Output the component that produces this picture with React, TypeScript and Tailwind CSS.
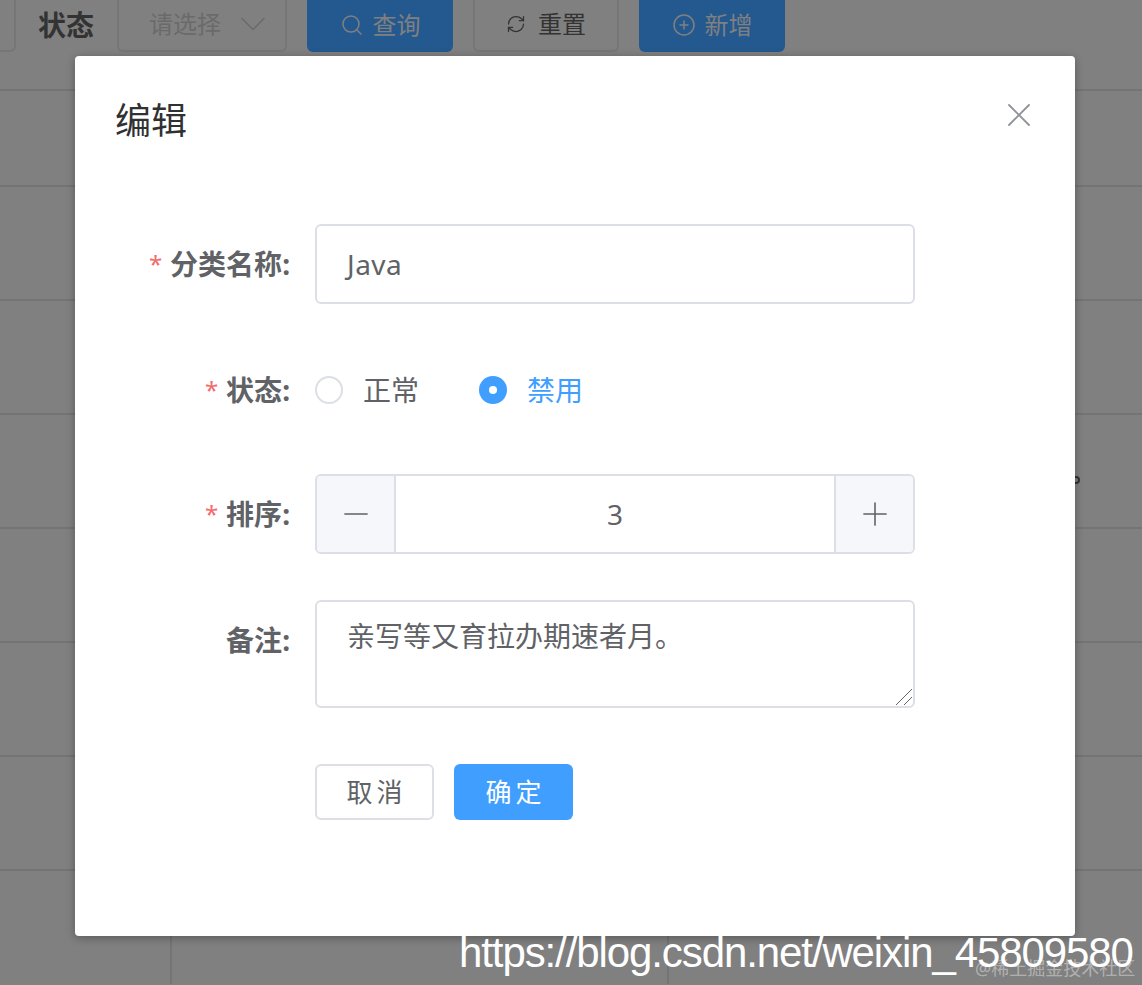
import { Search, RefreshCw, CirclePlus, ChevronDown, X, Minus, Plus } from 'lucide-react';

const font = 'font-["Noto_Sans","Noto_Sans_CJK_SC",sans-serif]';

// table rows behind the overlay
const rowHeights = ['h-[39px]', 'h-[96px]', 'h-[114px]', 'h-[114px]', 'h-[114px]', 'h-[114px]', 'h-[114px]', 'h-[114px]'];

function Backdrop() {
  return (
    <div className="h-[985px] overflow-hidden bg-[#808080]">
      {/* Toolbar */}
      <div className="flex h-[52px] items-end text-[#5e5e5e]">
        <div className="h-[52px] w-[16px] rounded-br-md border-r-2 border-b-2 border-[#767676]" />
        <span className="mb-[11px] ml-[22px] text-[28px] leading-[32px] font-bold text-[#333333]">状态</span>
        <div className="ml-[23px] flex h-[52px] w-[170px] items-center justify-between rounded-b-md border-2 border-t-0 border-[#767676] pb-[3px] pr-[10px] pl-[30px]">
          <span className="text-[24px] text-[#6a6a6a]">请选择</span>
          <ChevronDown className="h-[44px] w-[44px] text-[#6a6a6a]" strokeWidth={0.8} />
        </div>
        <div className="ml-[20px] flex h-[52px] w-[146px] items-center justify-center gap-[9px] rounded-b-md bg-[#24598f] pb-[3px] text-[#808080]">
          <Search className="h-[24px] w-[24px]" strokeWidth={1.5} />
          <span className="text-[24px]">查询</span>
        </div>
        <div className="ml-[20px] flex h-[52px] w-[146px] items-center justify-center gap-[12px] rounded-b-md border-2 border-t-0 border-[#767676] pb-[3px] text-[#333333]">
          <RefreshCw className="h-[20px] w-[20px]" strokeWidth={1.5} />
          <span className="text-[24px]">重置</span>
        </div>
        <div className="ml-[20px] flex h-[52px] w-[146px] items-center justify-center gap-[9px] rounded-b-md bg-[#24598f] pb-[3px] text-[#808080]">
          <CirclePlus className="h-[24px] w-[24px]" strokeWidth={1.5} />
          <span className="text-[24px]">新增</span>
        </div>
      </div>

      {/* Table */}
      {rowHeights.map((h, i) => (
        <div key={i} className={`${h} border-b-2 border-[#747474]`} />
      ))}
      <div className="flex h-[113px]">
        <div className="h-full w-[172px] border-r-2 border-[#747474]" />
        <div className="h-full w-[497px] border-r-2 border-[#747474]" />
      </div>
    </div>
  );
}

function Label({ text, required }: { text: string; required?: boolean }) {
  return (
    <label className="flex w-[175px] shrink-0 items-center justify-end text-[28px] leading-[30px] font-bold text-[#606266]">
      {required && <span className="mr-[8px] text-[24px] font-normal text-[#f56c6c]">*</span>}
      {text}:
    </label>
  );
}

export default function App() {
  return (
    <div className={`relative h-[985px] w-[1142px] overflow-hidden ${font}`}>
      <Backdrop />

      {/* Bits of the page that stick out from behind the dialog */}
      <span className="absolute top-[476px] left-[1072px] h-[8px] w-[8px] rounded-full border-2 border-[#333333]" />
      <span className="absolute top-[906px] left-[835px] text-[26px] leading-[30px] font-bold whitespace-nowrap text-[#222222]">
        精选分类 3
      </span>

      {/* Dialog */}
      <div className="absolute top-[56px] left-[75px] h-[880px] w-[1000px] rounded-[4px] bg-white px-[40px] shadow-[0_2px_10px_rgba(0,0,0,0.3)]">
        <div className="flex h-[168px] items-start justify-between pt-[38px]">
          <span className="text-[36px] leading-[54px] text-[#303133]">编辑</span>
          <X className="mt-[1px] mr-[-4px] h-[40px] w-[40px] text-[#909399]" strokeWidth={1.1} />
        </div>

        {/* Form */}
        <div className="flex h-[80px] items-center gap-[25px]">
          <Label text="分类名称" required />
          <div className="flex h-[80px] w-[600px] items-center rounded-[6px] border-2 border-[#dcdfe6] pl-[30px] text-[28px] tracking-[0.5px] text-[#606266]">
            Java
          </div>
        </div>

        <div className="mt-[46px] flex h-[80px] items-center gap-[25px]">
          <Label text="状态" required />
          <div className="flex items-center">
            <span className="h-[28px] w-[28px] rounded-full border-2 border-[#dcdfe6] bg-white" />
            <span className="ml-[20px] text-[28px] text-[#606266]">正常</span>
            <span className="ml-[60px] flex h-[28px] w-[28px] items-center justify-center rounded-full bg-[#409eff]">
              <span className="h-[8px] w-[8px] rounded-full bg-white" />
            </span>
            <span className="ml-[20px] text-[28px] text-[#409eff]">禁用</span>
          </div>
        </div>

        <div className="mt-[44px] flex h-[80px] items-center gap-[25px]">
          <Label text="排序" required />
          <div className="flex h-[80px] w-[600px] items-stretch overflow-hidden rounded-[6px] border-2 border-[#dcdfe6] text-[#606266]">
            <div className="flex w-[79px] items-center justify-center border-r-2 border-[#dcdfe6] bg-[#f5f7fa]">
              <Minus className="h-[38px] w-[38px]" strokeWidth={1} />
            </div>
            <div className="flex flex-1 items-center justify-center text-[28px]">3</div>
            <div className="flex w-[79px] items-center justify-center border-l-2 border-[#dcdfe6] bg-[#f5f7fa]">
              <Plus className="h-[38px] w-[38px]" strokeWidth={1} />
            </div>
          </div>
        </div>

        <div className="mt-[46px] flex h-[108px] items-start gap-[25px]">
          <div className="flex h-[80px] items-center">
            <Label text="备注" />
          </div>
          <div className="relative h-[108px] w-[600px] rounded-[6px] border-2 border-[#dcdfe6] pt-[13px] pl-[30px] text-[28px] leading-[42px] text-[#606266]">
            亲写等又育拉办期速者月。
            <svg className="absolute right-0 bottom-0" width="18" height="18" viewBox="0 0 18 18" stroke="#666" strokeWidth="1" fill="none">
              <path d="M1 17 17 1M9 17l8-8" />
            </svg>
          </div>
        </div>

        <div className="mt-[56px] ml-[200px] flex gap-[20px]">
          <button className="h-[56px] w-[119px] rounded-[6px] border-2 border-[#dcdfe6] bg-white pl-[4px] text-[26px] tracking-[4px] text-[#606266]">取消</button>
          <button className="h-[56px] w-[119px] rounded-[6px] bg-[#409eff] pl-[4px] text-[26px] tracking-[4px] text-white">确定</button>
        </div>
      </div>

      {/* Blog watermark */}
      <span className="absolute top-[926px] left-[459px] font-['Liberation_Sans',sans-serif] text-[42px] leading-[54px] tracking-[-1.1px] whitespace-nowrap text-white">
        https://blog.csdn.net/weixin_45809580
      </span>
      <span className="absolute top-[955px] left-[975px] text-[18px] leading-[26px] whitespace-nowrap text-white/40">
        @稀土掘金技术社区
      </span>
    </div>
  );
}
